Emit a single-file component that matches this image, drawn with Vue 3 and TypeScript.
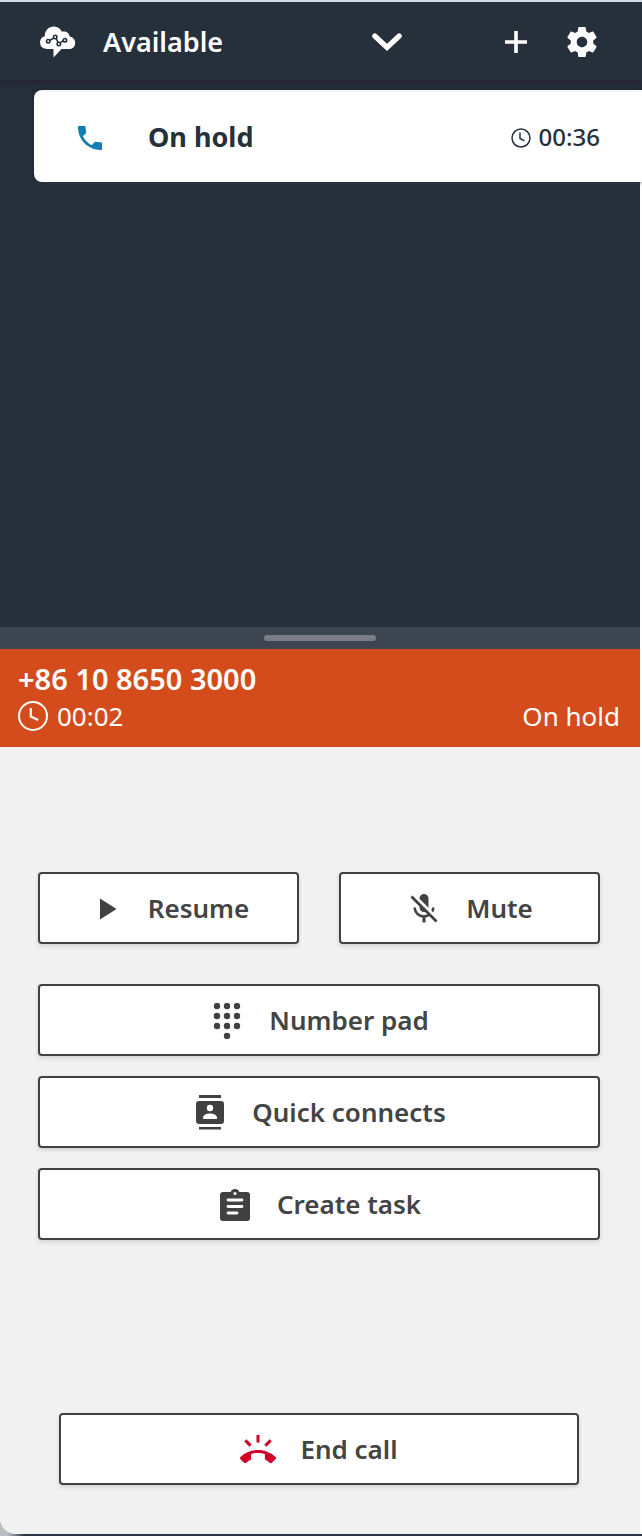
<script setup lang="ts">
import { ref } from 'vue'

const statuses: string[] = ['Available', 'Offline']
const status = ref<string>('Available')
const contact = { state: 'On hold', elapsed: '00:36' }
const call = { number: '+86 10 8650 3000', elapsed: '00:02', state: 'On hold' }

const keypadDots: [number, number][] = [
  [8, 3], [18, 3], [28, 3],
  [8, 13], [18, 13], [28, 13],
  [8, 23], [18, 23], [28, 23],
  [18, 33],
]
</script>

<template>
  <div class="frame">
    <div class="shell">
      <header class="topbar">
        <svg class="logo" viewBox="0 0 36 32" aria-hidden="true">
          <path
            fill="#fff"
            d="M7.500 23C3 23 0 20.200 0 16.500C0 13.200 2 10.800 4.800 10.300C4.600 4.500 8.600 0.500 14 0.500C17.800 0.500 20.600 2.700 21.900 5.800C25.800 4.700 29.300 7 29.600 10.600C33 11.300 35.200 13.700 35.200 16.900C35.200 20.500 32.500 23 28.800 23H21.500L13.500 31.500V23Z"
          />
          <g fill="none" stroke="#26303b" stroke-width="1.600">
            <path d="M9.800 14.400L13.500 12.200M16.200 12.500L18 16.300M20.300 16.600L23.300 14.800" />
            <circle cx="8.200" cy="15.200" r="1.700" />
            <circle cx="15.200" cy="11" r="1.700" />
            <circle cx="18.800" cy="18" r="1.700" />
            <circle cx="25" cy="14.200" r="1.700" />
          </g>
        </svg>
        <div class="status">
          <select v-model="status" aria-label="Agent status">
            <option v-for="s in statuses" :key="s" :value="s">{{ s }}</option>
          </select>
          <svg class="chevron" viewBox="0 0 30 20" aria-hidden="true">
            <path d="M2.800 4L15 15.500L27.200 4" fill="none" stroke="#fff" stroke-width="5.200" stroke-linecap="round" />
          </svg>
        </div>
        <button class="icon-button" type="button" aria-label="New contact">
          <svg viewBox="0 0 36 36" aria-hidden="true">
            <path d="M18 7V29M7 18H29" stroke="#fff" stroke-width="3.600" />
          </svg>
        </button>
        <button class="icon-button" type="button" aria-label="Settings">
          <svg viewBox="0 0 24 24" fill="#fff" aria-hidden="true">
            <path d="M19.430 12.980c.04-.32.07-.64.07-.98s-.03-.66-.07-.98l2.110-1.650c.19-.15.24-.42.12-.64l-2-3.460c-.12-.22-.39-.3-.61-.22l-2.490 1c-.52-.4-1.080-.73-1.690-.98l-.38-2.650C14.460 2.180 14.250 2 14 2h-4c-.25 0-.46.18-.49.42l-.38 2.650c-.61.25-1.170.59-1.690.98l-2.490-1c-.23-.09-.49 0-.61.22l-2 3.460c-.13.22-.07.49.12.64l2.110 1.650c-.04.32-.07.65-.07.98s.03.66.07.98l-2.110 1.650c-.19.15-.24.42-.12.64l2 3.460c.12.22.39.3.61.22l2.490-1c.52.4 1.080.73 1.690.98l.38 2.650c.03.24.24.42.49.42h4c.25 0 .46-.18.49-.42l.38-2.650c.61-.25 1.170-.59 1.690-.98l2.490 1c.23.09.49 0 .61-.22l2-3.460c.12-.22.07-.49-.12-.64l-2.110-1.650zM12 15.500c-1.930 0-3.500-1.570-3.500-3.500s1.570-3.500 3.500-3.500 3.500 1.570 3.500 3.500-1.570 3.500-3.500 3.500z" />
          </svg>
        </button>
      </header>

      <section class="contacts" aria-label="Contacts">
        <div class="contact-row">
          <button class="contact" type="button">
            <svg class="phone" viewBox="0 0 24 24" fill="#147eb4" aria-hidden="true">
              <path d="M21 15.460l-5.270-.61-2.520 2.520c-2.830-1.440-5.150-3.750-6.590-6.590l2.530-2.530L8.540 3H3.030C2.450 13.180 10.820 21.550 21 20.970v-5.510z" />
            </svg>
            <span class="contact-state">{{ contact.state }}</span>
            <svg class="clock-small" viewBox="0 0 20 20" fill="none" stroke="#26303b" aria-hidden="true">
              <circle cx="10" cy="10" r="9" stroke-width="1.500" />
              <path d="M9 4.500V10.500L13.500 12.800" stroke-width="1.500" />
            </svg>
            <span class="contact-time">{{ contact.elapsed }}</span>
          </button>
        </div>
        <div class="contacts-space"></div>
      </section>

      <div class="grip" role="separator" aria-orientation="horizontal"><span></span></div>

      <section class="call" aria-label="Current call">
        <strong class="number">{{ call.number }}</strong>
        <div class="call-line">
          <svg class="clock" viewBox="0 0 30 30" fill="none" stroke="#fff" aria-hidden="true">
            <circle cx="15" cy="15" r="14" stroke-width="2" />
            <path d="M12.800 7V15.500L20.200 19" stroke-width="2.200" />
          </svg>
          <span>{{ call.elapsed }}</span>
          <span class="call-state">{{ call.state }}</span>
        </div>
      </section>

      <main class="controls">
        <div class="pair">
          <button class="action" type="button">
            <svg viewBox="0 0 24 24" aria-hidden="true"><path d="M8 5v14l11-7z" /></svg>
            <span>Resume</span>
          </button>
          <button class="action" type="button">
            <svg viewBox="0 0 24 24" aria-hidden="true">
              <path d="M19 11h-1.700c0 .74-.16 1.430-.43 2.050l1.230 1.230c.56-.98.9-2.090.9-3.280zm-4.020.17c0-.06.02-.11.02-.17V5c0-1.660-1.340-3-3-3S9 3.340 9 5v.18l5.980 5.990zM4.270 3L3 4.270l6.010 6.010V11c0 1.660 1.330 3 2.990 3 .22 0 .44-.03.65-.08l1.660 1.660c-.71.33-1.500.52-2.310.52-2.760 0-5.300-2.100-5.300-5.100H5c0 3.410 2.720 6.230 6 6.720V21h2v-3.280c.91-.13 1.770-.45 2.540-.9L19.730 21 21 19.730 4.270 3z" />
            </svg>
            <span>Mute</span>
          </button>
        </div>

        <div class="stack">
          <button class="action" type="button">
            <svg viewBox="0 0 36 36" aria-hidden="true">
              <circle v-for="[x, y] in keypadDots" :key="`${x}-${y}`" :cx="x" :cy="y" r="3.200" />
            </svg>
            <span>Number pad</span>
          </button>
          <button class="action" type="button">
            <svg viewBox="0 0 36 36" aria-hidden="true">
              <path d="M7 0H29V3H7ZM7 32H29V34.500H7Z" />
              <rect x="4" y="6" width="28" height="23" rx="3" />
              <circle cx="18" cy="13" r="3.200" fill="#fff" />
              <path fill="#fff" d="M11 24V22.500C11 19.800 15 18.400 18 18.400S25 19.800 25 22.500V24Z" />
            </svg>
            <span>Quick connects</span>
          </button>
          <button class="action" type="button">
            <svg viewBox="0 0 36 36" aria-hidden="true">
              <rect x="3" y="5" width="30" height="29" rx="3" />
              <circle cx="18" cy="6.500" r="4.500" />
              <circle cx="18" cy="6.500" r="1.600" fill="#fff" />
              <path d="M11 13H25M11 19.500H25M11 26H20" stroke="#fff" stroke-width="2.800" stroke-linecap="round" />
            </svg>
            <span>Create task</span>
          </button>
        </div>

        <button class="action end" type="button">
          <svg viewBox="0 0 24 24" aria-hidden="true">
            <path d="M23.710 16.670C20.660 13.780 16.540 12 12 12 7.460 12 3.340 13.780.29 16.670c-.18.18-.29.43-.29.71 0 .28.11.53.29.71l2.480 2.480c.18.18.43.29.71.29.27 0 .52-.11.7-.28.79-.74 1.690-1.360 2.660-1.850.33-.16.56-.5.56-.9v-3.100c1.450-.48 3-.73 4.600-.73 1.600 0 3.150.25 4.600.72v3.100c0 .39.23.74.56.9.98.49 1.870 1.120 2.670 1.850.18.18.43.28.7.28.28 0 .53-.11.71-.29l2.480-2.480c.18-.18.29-.43.29-.71 0-.28-.12-.52-.3-.7zM21.160 6.260l-1.410-1.410-3.560 3.550 1.410 1.410s3.450-3.520 3.560-3.550zM13 2h-2v5h2V2zM6.400 9.810L7.810 8.400 4.260 4.840 2.840 6.260c.11.03 3.560 3.550 3.560 3.550z" />
          </svg>
          <span>End call</span>
        </button>
      </main>
    </div>
  </div>
</template>

<style>
body {
  margin: 0;
}
</style>

<style scoped>
.frame {
  box-sizing: border-box;
  min-height: 100vh;
  display: flex;
  border-top: 2px solid #d0d8e1;
  background: linear-gradient(90deg, #b9bcc0 8px, #2b3545 24px);
  padding-bottom: 2px;
  font-family: "Noto Sans", "Open Sans", sans-serif;
}

.shell {
  flex: 1;
  min-width: 0;
  display: flex;
  flex-direction: column;
  background: #fdfdfd;
  border-bottom-left-radius: 16px;
  overflow: hidden;
}

button,
select {
  font: inherit;
  margin: 0;
  cursor: pointer;
}

.topbar {
  position: relative;
  z-index: 1;
  display: flex;
  align-items: center;
  height: 78px;
  padding: 2px 42px 0 40px;
  box-sizing: border-box;
  background: #26303b;
  box-shadow: 0 2px 10px #231f30;
}

.logo {
  width: 36px;
  height: 32px;
  flex: none;
}

.status {
  flex: 1;
  display: grid;
  align-items: center;
  margin: 0 96px 0 27px;
}

.status select,
.chevron {
  grid-area: 1 / 1;
}

.status select {
  appearance: none;
  width: 100%;
  height: 40px;
  border: 0;
  padding: 0 0 2px;
  background: transparent;
  color: #fff;
  font-size: 27px;
  font-weight: 600;
}

.chevron {
  justify-self: end;
  width: 30px;
  height: 20px;
  pointer-events: none;
}

.icon-button {
  flex: none;
  width: 36px;
  height: 36px;
  padding: 0;
  border: 0;
  background: none;
}

.icon-button + .icon-button {
  margin-left: 30px;
}

.icon-button svg {
  display: block;
}

.contacts {
  flex: 1;
  display: flex;
  flex-direction: column;
}

.contact-row {
  padding: 10px 0 0 34px;
  background: #26303b;
}

.contact {
  display: flex;
  align-items: center;
  width: 100%;
  height: 92px;
  padding: 0 42px 0 40px;
  border: 0;
  border-radius: 8px 0 0 8px;
  background: #fff;
  color: #26303b;
  box-shadow: 0 0 4px #1c2230;
}

.contact svg {
  flex: none;
  margin-top: 3px;
}

.phone {
  width: 32px;
  height: 32px;
}

.contact-state {
  flex: 1;
  margin-left: 42px;
  text-align: left;
  font-size: 27px;
  font-weight: 700;
}

.clock-small {
  width: 20px;
  height: 20px;
}

.contact-time {
  margin-left: 8px;
  font-size: 24px;
  font-weight: 500;
}

.contacts-space {
  flex: 1;
  min-height: 120px;
  margin-right: 2px;
  background: #26303b;
}

.grip {
  display: flex;
  align-items: center;
  justify-content: center;
  height: 22px;
  margin-right: 2px;
  background: #3d4550;
}

.grip span {
  width: 112px;
  height: 6px;
  border-radius: 3px;
  background: #797e87;
}

.call {
  margin-right: 2px;
  padding: 12px 20px 12px 18px;
  background: #d44c1b;
  color: #fff;
}

.number {
  display: block;
  font-size: 29px;
  line-height: 36px;
  font-weight: 600;
}

.call-line {
  display: flex;
  align-items: center;
  font-size: 26px;
  line-height: 38px;
  font-weight: 400;
}

.clock {
  width: 30px;
  height: 30px;
  flex: none;
  margin-right: 9px;
}

.call-state {
  margin-left: auto;
}

.controls {
  display: flex;
  flex-direction: column;
  margin-right: 2px;
  padding: 125px 40px 49px 38px;
  background: #f1f1f1;
}

.pair {
  display: grid;
  grid-template-columns: 1fr 1fr;
  gap: 40px;
}

.stack {
  display: grid;
  gap: 20px;
  margin-top: 40px;
}

.action {
  display: flex;
  align-items: center;
  justify-content: center;
  gap: 24px;
  height: 72px;
  padding: 0;
  border: 2px solid #414141;
  border-radius: 4px;
  background: #fff;
  color: #444;
  font-size: 26px;
  font-weight: 600;
  box-shadow: 0 2px 4px rgba(0, 0, 0, 0.14);
}

.action svg {
  width: 36px;
  height: 36px;
  flex: none;
  margin-top: 2px;
  fill: #414141;
}

.action.end {
  margin: 173px 21px 0;
}

.action.end svg {
  fill: #cf0227;
}
</style>
